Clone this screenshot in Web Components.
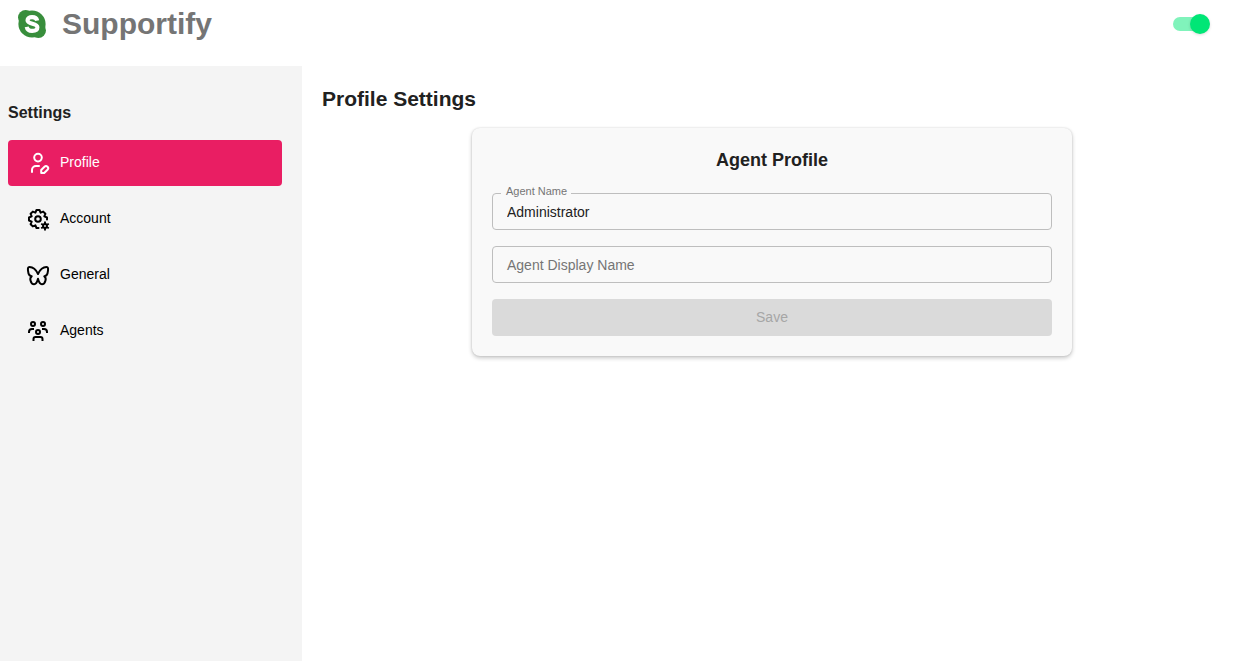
<!DOCTYPE html>
<html lang="en">
<head>
<meta charset="utf-8">
<meta name="viewport" content="width=device-width, initial-scale=1">
<title>Supportify</title>
<style>
  html, body { height: 100%; }
  body { margin: 0; background: #fff; color: #212121; font-family: "Liberation Sans", Arial, sans-serif; font-size: 14px; }
</style>
</head>
<body>
<support-app></support-app>

<template id="t-app">
  <style>
    :host { display: flex; flex-direction: column; min-height: 100%; }
    .body { flex: 1; display: flex; }
    settings-nav { flex: 0 0 302px; }
    main { flex: 1; min-width: 0; padding: 20px 12px 20px 20px; }
    h1 { margin: 0 0 16px; font-size: 21px; line-height: 26px; }
  </style>
  <app-header></app-header>
  <div class="body">
    <settings-nav>
      <nav-item icon="profile" active>Profile</nav-item>
      <nav-item icon="account">Account</nav-item>
      <nav-item icon="general">General</nav-item>
      <nav-item icon="agents">Agents</nav-item>
    </settings-nav>
    <main>
      <h1>Profile Settings</h1>
      <form-card heading="Agent Profile">
        <text-field label="Agent Name" value="Administrator"></text-field>
        <text-field label="Agent Display Name"></text-field>
        <save-button>Save</save-button>
      </form-card>
    </main>
  </div>
</template>

<template id="t-header">
  <style>
    :host { display: block; }
    header { display: flex; align-items: flex-start; justify-content: space-between; height: 66px; box-sizing: border-box; padding: 4px 24px 0 16px; }
    a { display: flex; align-items: center; gap: 14px; color: #757575; font-size: 30px; line-height: 40px; font-weight: bold; text-decoration: none; }
    svg { width: 32px; height: 32px; fill: #388e3c; }
    toggle-switch { margin-top: 10px; }
  </style>
  <header>
    <a href="#">
      <svg viewBox="0 0 32 32" aria-hidden="true"><circle cx="9.6" cy="9.6" r="7.6"/><circle cx="22.4" cy="22.4" r="7.6"/><circle cx="16" cy="16" r="13.6"/><path d="M21.2 12.6C20.6 10 18.5 9.1 16.1 9.1c-2.8 0-4.6 1.2-4.6 3.2 0 4.6 9.9 2.4 9.9 7 0 2.4-2.3 3.6-5.2 3.6-2.9 0-5-1.3-5.5-4.1" fill="none" stroke="#fff" stroke-width="4.1"/></svg>
      <span>Supportify</span>
    </a>
    <toggle-switch></toggle-switch>
  </header>
</template>

<template id="t-switch">
  <style>
    :host { display: block; }
    input { appearance: none; display: flex; align-items: center; position: relative; width: 37px; height: 20px; margin: 0; cursor: pointer; }
    input::before { content: ""; width: 34px; height: 14px; border-radius: 7px; background: #9e9e9e; }
    input::after { content: ""; position: absolute; left: 0; top: 0; width: 20px; height: 20px; border-radius: 50%; background: #fafafa; box-shadow: 0 1px 3px rgba(0,0,0,.14); }
    input:checked::before { background: #80f3bb; }
    input:checked::after { left: auto; right: 0; background: #00e676; }
  </style>
  <input type="checkbox" role="switch" aria-label="Online" checked>
</template>

<template id="t-nav">
  <style>
    :host { display: block; box-sizing: border-box; padding: 36px 20px 20px 8px; background: #f4f4f4; }
    h2 { margin: 0 0 16px; font-size: 16px; line-height: 22px; }
    nav { display: flex; flex-direction: column; gap: 10px; }
  </style>
  <h2>Settings</h2>
  <nav aria-label="Settings"><slot></slot></nav>
</template>

<template id="t-item">
  <style>
    :host { display: block; }
    a { display: flex; align-items: center; gap: 10px; height: 46px; padding: 0 18px; border-radius: 4px; color: #000; line-height: 20px; text-decoration: none; }
    :host([active]) a { background: #e91e63; color: #fff; }
    svg { width: 24px; height: 24px; flex: none; fill: none; stroke: currentColor; stroke-width: 2; stroke-linecap: round; stroke-linejoin: round; }
    span { padding-bottom: 2px; }
  </style>
  <a href="#"><svg viewBox="0 0 24 24" aria-hidden="true"></svg><span><slot></slot></span></a>
</template>

<template id="t-card">
  <style>
    :host { display: block; box-sizing: border-box; max-width: 600px; margin: 0 auto; padding: 20px; border-radius: 8px; background: #f9f9f9; box-shadow: 0 2px 4px rgba(0,0,0,.22), 0 0 2px rgba(0,0,0,.14); }
    h2 { margin: 0 0 21px; font-size: 18px; line-height: 24px; text-align: center; }
    form { display: flex; flex-direction: column; gap: 16px; }
  </style>
  <h2></h2>
  <form><slot></slot></form>
</template>

<template id="t-field">
  <style>
    :host { display: block; position: relative; }
    input { display: block; box-sizing: border-box; width: 100%; height: 37px; padding: 0 14px; border: 1px solid #bebebe; border-radius: 4px; background: transparent; color: #212121; font: inherit; outline: none; }
    input:focus { border-color: #e91e63; }
    label { position: absolute; left: 15px; top: 9px; line-height: 20px; color: #757575; }
    input:not(:placeholder-shown) + label { left: 9px; top: -8px; padding: 0 4px 0 5px; background: #f9f9f9; font-size: 11px; line-height: 12px; }
  </style>
  <input id="box" type="text" placeholder=" "><label for="box"></label>
</template>

<template id="t-save">
  <style>
    :host { display: block; }
    button { display: block; width: 100%; height: 37px; padding: 0 0 2px; border: 0; border-radius: 4px; background: #dadada; color: #a6a6a6; font: inherit; }
  </style>
  <button type="submit" disabled><slot></slot></button>
</template>

<script>
  const ICONS = {
    profile: '<circle cx="12" cy="6.6" r="3.8"/><path d="M6 21v-2a4 4 0 0 1 4-4h3"/><path d="M15.2 22v-3l3.3-3.3a2 2 0 0 1 3 3L18.2 22z"/>',
    account: '<path d="M12.5 21H10.5L9.4 18.3 6.8 19.4 4.6 17.2 5.7 14.6 3 13.5V10.5L5.7 9.4 4.6 6.8 6.8 4.6 9.4 5.7 10.5 3H13.5L14.6 5.7 17.2 4.6 19.4 6.8 18.3 9.4 21 10.5V12.5"/><circle cx="12" cy="12" r="2.8"/><circle cx="19" cy="19" r="1.9"/><path stroke-width="1.9" stroke-linecap="butt" d="M19 17.5v-2.9M19 20.5v2.9M17.3 18l-2.1-1.2M20.7 20l2.1 1.2M17.3 20l-2.1 1.2M20.7 18l2.1-1.2"/>',
    general: '<path d="M12 11C10.2 7 6.7 4 3.5 4 1.8 4 1.8 5.5 2 7.7c.3 3.2 1.5 5.5 3.7 5.6C4.2 14.3 4 15.7 4.5 17.5 5 19.4 6.5 21.3 8.1 21.3c1.8 0 3.2-2.8 3.9-5.5.7 2.7 2.1 5.5 3.9 5.5 1.6 0 3.1-1.9 3.6-3.8.5-1.8.3-3.2-1.2-4.2 2.2-.1 3.4-2.4 3.7-5.6.2-2.2.2-3.7-1.5-3.7C17.3 4 13.8 7 12 11z"/>',
    agents: '<g stroke-linecap="butt"><circle cx="7" cy="5" r="2"/><circle cx="17" cy="5" r="2"/><circle cx="12" cy="13" r="2"/><path d="M3 14v-1a3 3 0 0 1 3-3h2M21 14v-1a3 3 0 0 0-3-3h-2M7.5 22v-2a2 2 0 0 1 2-2h5a2 2 0 0 1 2 2v2"/></g>'
  };
  class Base extends HTMLElement {
    constructor() {
      super();
      const tpl = document.getElementById(this.constructor.template);
      this.attachShadow({ mode: 'open' }).append(document.importNode(tpl.content, true));
    }
    find(selector) { return this.shadowRoot.querySelector(selector); }
  }
  class ToggleSwitch extends Base { static template = 't-switch'; }
  class AppHeader extends Base { static template = 't-header'; }
  class SettingsNav extends Base { static template = 't-nav'; }
  class SaveButton extends Base { static template = 't-save'; }
  class NavItem extends Base {
    static template = 't-item';
    connectedCallback() {
      this.find('svg').innerHTML = ICONS[this.getAttribute('icon')];
      if (this.hasAttribute('active')) this.find('a').setAttribute('aria-current', 'page');
    }
  }
  class FormCard extends Base {
    static template = 't-card';
    connectedCallback() { this.find('h2').textContent = this.getAttribute('heading'); }
  }
  class TextField extends Base {
    static template = 't-field';
    connectedCallback() {
      this.find('label').textContent = this.getAttribute('label');
      this.find('input').value = this.getAttribute('value') || '';
    }
  }
  class SupportApp extends Base { static template = 't-app'; }
  customElements.define('toggle-switch', ToggleSwitch);
  customElements.define('app-header', AppHeader);
  customElements.define('nav-item', NavItem);
  customElements.define('settings-nav', SettingsNav);
  customElements.define('text-field', TextField);
  customElements.define('save-button', SaveButton);
  customElements.define('form-card', FormCard);
  customElements.define('support-app', SupportApp);
</script>
</body>
</html>
